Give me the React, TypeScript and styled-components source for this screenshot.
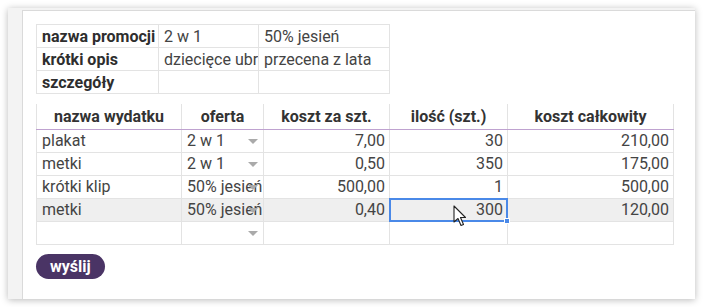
import React from "react";
import styled, { createGlobalStyle } from "styled-components";

const Global = createGlobalStyle`
  html, body { margin: 0; padding: 0; background: #fff; }
  body { padding: 8px; font-family: Roboto, "Liberation Sans", Arial, sans-serif; }
  * { box-sizing: border-box; }
`;

const Frame = styled.div`
  width: 687px;
  height: 291px;
  background: #f3f3f3;
  box-shadow: 0 1px 7px rgba(0, 0, 0, 0.28);
  padding: 2px 0 0 14px;
  display: flex;
`;

const Panel = styled.div`
  flex: 1;
  background: #fff;
  border-left: 1px solid #dadada;
  border-top: 1px solid #dadada;
  padding: 13px 0 0 13px;
  display: flex;
  flex-direction: column;
  align-items: flex-start;
`;

const Table = styled.table<{ $w: number }>`
  width: ${(p) => p.$w}px;
  border-collapse: collapse;
  table-layout: fixed;
  font-size: 16px;
  color: #444;
`;

const Row = styled.tr<{ $hover?: boolean }>`
  height: 23px;
  background: ${(p) => (p.$hover ? "#efefef" : "transparent")};
`;

const Cell = styled.td<{ $num?: boolean; $bold?: boolean }>`
  border: 1px solid #e3e3e3;
  padding: 0 4px 0 5px;
  text-align: ${(p) => (p.$num ? "right" : "left")};
  font-weight: ${(p) => (p.$bold ? 700 : 400)};
  color: ${(p) => (p.$bold ? "#2e2e2e" : "#444")};
  white-space: nowrap;
  overflow: hidden;
  line-height: 21px;
  position: relative;
`;

const HeadCell = styled.th`
  border-left: 1px solid #e3e3e3;
  border-right: 1px solid #e3e3e3;
  border-bottom: 1px solid #bfa2d0;
  height: 25px;
  padding: 0 4px;
  font-weight: 700;
  color: #333;
  text-align: center;
  white-space: nowrap;
`;

const SecondTable = styled(Table)`
  margin-top: 10px;
`;

const Arrow = styled.span`
  position: absolute;
  right: 5px;
  top: 9px;
  width: 0;
  height: 0;
  border-left: 5px solid transparent;
  border-right: 5px solid transparent;
  border-top: 5px solid #aaa;
`;

const Selection = styled.div`
  position: absolute;
  inset: -1px;
  border: 2px solid #4a89e8;
  pointer-events: none;
`;

const Handle = styled.div`
  position: absolute;
  right: -4px;
  bottom: -4px;
  width: 6px;
  height: 6px;
  background: #4a89e8;
  border: 1px solid #fff;
`;

const Cursor = styled.svg`
  position: absolute;
  left: 63px;
  top: 6px;
`;

const Button = styled.button`
  margin-top: 9px;
  height: 25px;
  padding: 0 14px;
  border: none;
  border-radius: 13px;
  background: #4a3465;
  color: #fff;
  font-family: Roboto, "Liberation Sans", Arial, sans-serif;
  font-weight: 700;
  font-size: 16px;
  line-height: 25px;
`;

const promoRows = [
  ["nazwa promocji", "2 w 1", "50% jesień"],
  ["krótki opis", "dziecięce ubrania", "przecena z lata"],
  ["szczegóły", "", ""],
];

const expenseRows = [
  ["plakat", "2 w 1", "7,00", "30", "210,00"],
  ["metki", "2 w 1", "0,50", "350", "175,00"],
  ["krótki klip", "50% jesień", "500,00", "1", "500,00"],
  ["metki", "50% jesień", "0,40", "300", "120,00"],
  ["", "", "", "", ""],
];

export default function App() {
  return (
    <>
      <Global />
      <Frame>
        <Panel>
          <Table $w={353}>
            <colgroup>
              <col style={{ width: 122 }} />
              <col style={{ width: 100 }} />
              <col style={{ width: 131 }} />
            </colgroup>
            <tbody>
              {promoRows.map((r, i) => (
                <Row key={i}>
                  <Cell $bold>{r[0]}</Cell>
                  <Cell>{r[1]}</Cell>
                  <Cell>{r[2]}</Cell>
                </Row>
              ))}
            </tbody>
          </Table>
          <SecondTable $w={637}>
            <colgroup>
              <col style={{ width: 145 }} />
              <col style={{ width: 82 }} />
              <col style={{ width: 126 }} />
              <col style={{ width: 118 }} />
              <col style={{ width: 166 }} />
            </colgroup>
            <thead>
              <tr>
                <HeadCell>nazwa wydatku</HeadCell>
                <HeadCell>oferta</HeadCell>
                <HeadCell>koszt za szt.</HeadCell>
                <HeadCell>ilość (szt.)</HeadCell>
                <HeadCell>koszt całkowity</HeadCell>
              </tr>
            </thead>
            <tbody>
              {expenseRows.map((r, i) => (
                <Row key={i} $hover={i === 3}>
                  <Cell>{r[0]}</Cell>
                  <Cell>
                    <Arrow />
                    {r[1]}
                  </Cell>
                  <Cell $num>{r[2]}</Cell>
                  <Cell $num style={i === 3 ? { overflow: "visible" } : undefined}>
                    {r[3]}
                    {i === 3 && (
                      <>
                        <Selection>
                          <Handle />
                        </Selection>
                        <Cursor width="14" height="22" viewBox="0 0 14 22">
                          <path
                            d="M1 1 L1 17 L5 13.5 L8 20.5 L10.5 19.5 L7.5 12.5 L12.5 12.5 Z"
                            fill="#fff"
                            stroke="#222"
                            strokeWidth="1.1"
                            strokeLinejoin="round"
                          />
                        </Cursor>
                      </>
                    )}
                  </Cell>
                  <Cell $num>{r[4]}</Cell>
                </Row>
              ))}
            </tbody>
          </SecondTable>
          <Button>wyślij</Button>
        </Panel>
      </Frame>
    </>
  );
}
